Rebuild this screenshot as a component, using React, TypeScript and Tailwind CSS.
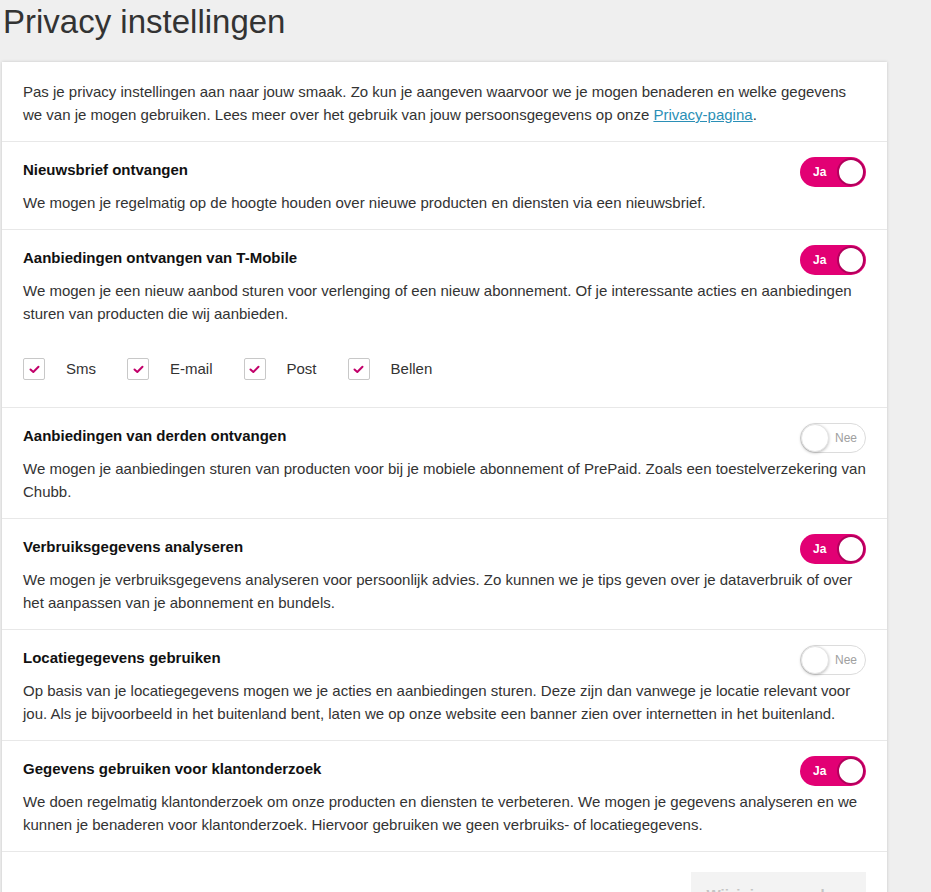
import React, { useState } from "react";

type Setting = {
  id: string;
  title: string;
  text: string;
  on: boolean;
  channels?: boolean;
};

const settings: Setting[] = [
  {
    id: "newsletter",
    title: "Nieuwsbrief ontvangen",
    text: "We mogen je regelmatig op de hoogte houden over nieuwe producten en diensten via een nieuwsbrief.",
    on: true,
  },
  {
    id: "offers",
    title: "Aanbiedingen ontvangen van T-Mobile",
    text: "We mogen je een nieuw aanbod sturen voor verlenging of een nieuw abonnement. Of je interessante acties en aanbiedingen sturen van producten die wij aanbieden.",
    on: true,
    channels: true,
  },
  {
    id: "thirdparty",
    title: "Aanbiedingen van derden ontvangen",
    text: "We mogen je aanbiedingen sturen van producten voor bij je mobiele abonnement of PrePaid. Zoals een toestelverzekering van Chubb.",
    on: false,
  },
  {
    id: "usage",
    title: "Verbruiksgegevens analyseren",
    text: "We mogen je verbruiksgegevens analyseren voor persoonlijk advies. Zo kunnen we je tips geven over je dataverbruik of over het aanpassen van je abonnement en bundels.",
    on: true,
  },
  {
    id: "location",
    title: "Locatiegegevens gebruiken",
    text: "Op basis van je locatiegegevens mogen we je acties en aanbiedingen sturen. Deze zijn dan vanwege je locatie relevant voor jou. Als je bijvoorbeeld in het buitenland bent, laten we op onze website een banner zien over internetten in het buitenland.",
    on: false,
  },
  {
    id: "research",
    title: "Gegevens gebruiken voor klantonderzoek",
    text: "We doen regelmatig klantonderzoek om onze producten en diensten te verbeteren. We mogen je gegevens analyseren en we kunnen je benaderen voor klantonderzoek. Hiervoor gebruiken we geen verbruiks- of locatiegegevens.",
    on: true,
  },
];

const channels = ["Sms", "E-mail", "Post", "Bellen"];

const Toggle: React.FC<{ on: boolean; onClick: () => void }> = ({ on, onClick }) => {
  if (on) {
    return (
      <button
        onClick={onClick}
        className="relative -mb-[6px] -mt-[2px] flex h-[30px] w-[66px] shrink-0 items-center rounded-full bg-[#e20074] pl-[13px]"
      >
        <span className="text-[12px] font-bold text-white">Ja</span>
        <span className="absolute right-[1px] top-[1px] h-[28px] w-[28px] rounded-full border-2 border-[#b3005c] bg-white" />
      </button>
    );
  }
  return (
    <button
      onClick={onClick}
      className="relative -mb-[6px] -mt-[2px] flex h-[30px] w-[66px] shrink-0 items-center justify-end rounded-full border border-[#dcdcdc] bg-white pr-[8px]"
    >
      <span className="text-[12px] text-[#a0a0a0]">Nee</span>
      <span className="absolute left-[0px] top-[0px] h-[28px] w-[28px] rounded-full border border-[#e4e4e4] bg-white shadow-[0_1px_3px_rgba(0,0,0,0.25)]" />
    </button>
  );
};

const Check: React.FC<{ label: string }> = ({ label }) => (
  <label className="flex items-center gap-[21px]">
    <span className="flex h-[22px] w-[22px] items-center justify-center rounded-[2px] border border-[#c8c8c8] bg-white">
      <svg width="11" height="9" viewBox="0 0 11 9" fill="none">
        <path d="M1.5 4.5 L4.3 7 L9.5 1.8" stroke="#c2006a" strokeWidth="2" strokeLinecap="round" strokeLinejoin="round" />
      </svg>
    </span>
    <span className="text-[15px] leading-[22px] text-[#333]">{label}</span>
  </label>
);

export default function App() {
  const [state, setState] = useState<Record<string, boolean>>(
    Object.fromEntries(settings.map((s) => [s.id, s.on]))
  );

  return (
    <div className="min-h-screen bg-[#efefef] font-['Liberation_Sans',Arial,sans-serif] text-[#333]">
      <h1 className="pl-[3px] pt-[2px] text-[33px] leading-[40px] text-[#333]">Privacy instellingen</h1>

      <div className="ml-[2px] mt-[20px] w-[885px] bg-white shadow-[0_0_3px_rgba(0,0,0,0.18)]">
        <p className="px-[21px] pb-[15px] pt-[18px] text-[15px] leading-[23px]">
          Pas je privacy instellingen aan naar jouw smaak. Zo kun je aangeven waarvoor we je mogen benaderen en welke gegevens
          we van je mogen gebruiken. Lees meer over het gebruik van jouw persoonsgegevens op onze{" "}
          <a href="#" className="text-[#2b8fb6] underline">
            Privacy-pagina
          </a>
          .
        </p>

        {settings.map((s) => (
          <div key={s.id} className="border-t border-[#e8e8e8] pb-[15px] pl-[21px] pr-[21px] pt-[17px]">
            <div className="flex items-start justify-between">
              <h2 className="text-[15px] font-bold leading-[22px] text-[#111]">{s.title}</h2>
              <Toggle
                on={state[s.id]}
                onClick={() => setState((p) => ({ ...p, [s.id]: !p[s.id] }))}
              />
            </div>
            <p className="-mr-[4px] mt-[10px] text-[15px] leading-[23px]">{s.text}</p>
            {s.channels && (
              <div className="mb-[12px] mt-[33px] flex gap-[31px]">
                {channels.map((c) => (
                  <Check key={c} label={c} />
                ))}
              </div>
            )}
          </div>
        ))}

        <div className="flex justify-end border-t border-[#e8e8e8] px-[21px] pb-[20px] pt-[20px]">
          <button className="h-[46px] w-[175px] bg-[#f3f3f3] text-[15px] font-bold text-[#c4c4c4]">
            Wijzigingen opslaan
          </button>
        </div>
      </div>
    </div>
  );
}
